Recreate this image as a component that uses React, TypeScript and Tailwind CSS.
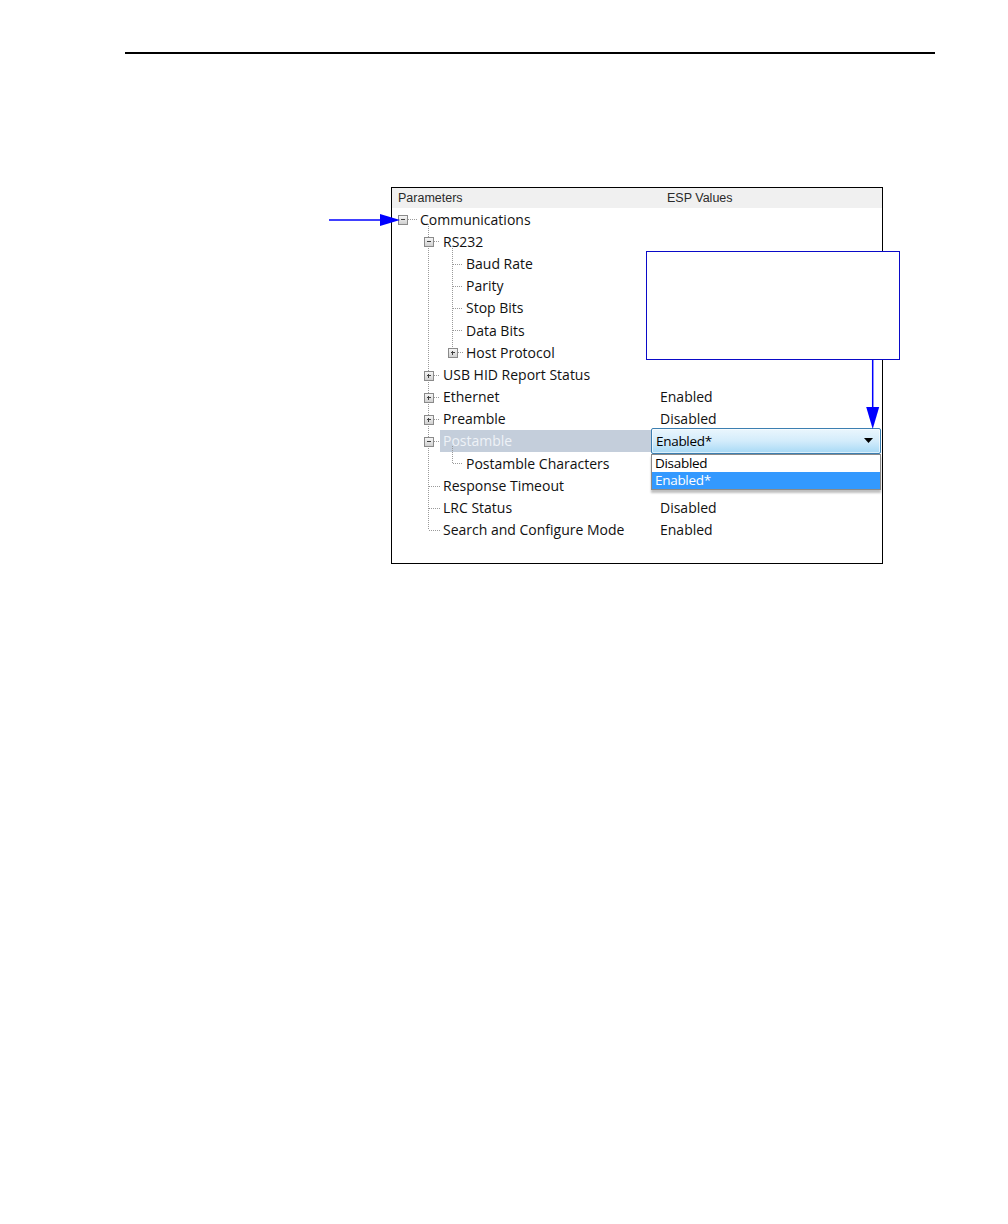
import React from "react";

type Row = {
  label: string;
  level: 0 | 1 | 2;
  box?: "minus" | "plus";
  value?: string;
  selected?: boolean;
};

const rows: Row[] = [
  { label: "Communications", level: 0, box: "minus" },
  { label: "RS232", level: 1, box: "minus" },
  { label: "Baud Rate", level: 2 },
  { label: "Parity", level: 2 },
  { label: "Stop Bits", level: 2 },
  { label: "Data Bits", level: 2 },
  { label: "Host Protocol", level: 2, box: "plus" },
  { label: "USB HID Report Status", level: 1, box: "plus" },
  { label: "Ethernet", level: 1, box: "plus", value: "Enabled" },
  { label: "Preamble", level: 1, box: "plus", value: "Disabled" },
  { label: "Postamble", level: 1, box: "minus", selected: true },
  { label: "Postamble Characters", level: 2 },
  { label: "Response Timeout", level: 1 },
  { label: "LRC Status", level: 1, value: "Disabled" },
  { label: "Search and Configure Mode", level: 1, value: "Enabled" },
];

const ROW_H = 22.2;
const LEVEL_X = [10.5, 36.5, 60.5];
const TEXT_X = [28, 51, 74];
const padClass = ["pl-[28px]", "pl-[51px]", "pl-[74px]"];

function TreeLines() {
  const cy = (i: number) => ROW_H / 2 + i * ROW_H;
  const dot = { stroke: "#9a9a9a", strokeWidth: 1, strokeDasharray: "1 1" };
  const els: React.ReactNode[] = [];
  const vlines: [number, number, number][] = [
    [LEVEL_X[1], cy(0) + 5, cy(14)],
    [LEVEL_X[2], cy(1) + 5, cy(6)],
    [LEVEL_X[2], cy(10) + 5, cy(11)],
  ];
  vlines.forEach(([x, y1, y2], k) =>
    els.push(<line key={"v" + k} x1={x} x2={x} y1={y1} y2={y2} {...dot} />)
  );
  rows.forEach((r, i) => {
    const x = LEVEL_X[r.level];
    const y = Math.round(cy(i)) + 0.5;
    const textX = TEXT_X[r.level];
    const startX = r.box ? x + 5 : x;
    els.push(
      <line key={"h" + i} x1={startX} x2={textX - 3} y1={y} y2={y} {...dot} />
    );
    if (r.box) {
      const bx = x - 4.5;
      const by = y - 4.5;
      els.push(
        <g key={"b" + i}>
          <rect x={bx} y={by} width={9} height={9} fill="url(#boxg)" stroke="#8a8a8a" strokeWidth={1} />
          <line x1={bx + 2.5} x2={bx + 7} y1={y} y2={y} stroke="#404040" strokeWidth={1} />
          {r.box === "plus" && (
            <line x1={x} x2={x} y1={by + 2.5} y2={by + 7} stroke="#404040" strokeWidth={1} />
          )}
        </g>
      );
    }
  });
  return (
    <svg
      className="absolute left-0 top-0 pointer-events-none"
      width={100}
      height={340}
      shapeRendering="crispEdges"
    >
      <defs>
        <linearGradient id="boxg" x1="0" y1="0" x2="0" y2="1">
          <stop offset="0" stopColor="#fafafa" />
          <stop offset="1" stopColor="#d0d0d0" />
        </linearGradient>
      </defs>
      {els}
    </svg>
  );
}

function ComboBox() {
  return (
    <div className="relative flex-1 h-[26px] -my-[2px] mr-[1px]">
      <div className="h-full rounded-[2px] border border-[#3c7fb1] bg-gradient-to-b from-[#eaf6fd] via-[#d3ecfb] to-[#a7d9f5] flex items-center justify-between pl-[4px] pr-[7px] shadow-[inset_0_0_0_1px_rgba(255,255,255,0.6)]">
        <span className="text-[13.5px] text-black tracking-[-0.3px]">Enabled*</span>
        <svg width="9" height="5" viewBox="0 0 9 5">
          <polygon points="0,0 9,0 4.5,5" fill="#000" />
        </svg>
      </div>
      <div className="absolute left-0 right-0 top-full z-10 bg-white border border-[#8a8a8a] shadow-[0_3px_2px_rgba(0,0,0,0.25)]">
        <div className="h-[17px] flex items-center pl-[3px] text-[13.5px] text-black tracking-[-0.3px]">Disabled</div>
        <div className="h-[17px] flex items-center pl-[3px] text-[13.5px] text-white bg-[#3399ff] tracking-[-0.3px]">Enabled*</div>
      </div>
    </div>
  );
}

function TreeRow({ r }: { r: Row }) {
  if (r.selected) {
    return (
      <div className="h-[22.2px] flex items-center">
        <div className="w-[259px] h-full flex items-center pl-[48px]">
          <div className="w-full h-full bg-[#c4cedb] flex items-center pl-[3px] text-[#eef2f7]">
            {r.label}
          </div>
        </div>
        <ComboBox />
      </div>
    );
  }
  return (
    <div className="h-[22.2px] grid grid-cols-[268px_1fr] items-center">
      <div className={padClass[r.level] + " whitespace-nowrap"}>{r.label}</div>
      <div>{r.value ?? ""}</div>
    </div>
  );
}

export default function App() {
  return (
    <div
      className="relative w-[1008px] h-[1224px] bg-white overflow-hidden"
      style={{ fontFamily: '"Open Sans", "Noto Sans", sans-serif' }}
    >
      <div className="pt-[52px] pl-[125px]">
        <div className="w-[810px] h-[2px] bg-black" />
      </div>

      <div className="ml-[391px] mt-[133px] w-[492px] h-[377px] border border-black bg-white">
        <div
          className="h-[20px] bg-[#f0f0f0] grid grid-cols-[275px_1fr] items-center text-[12.5px] text-[#2a2a2a]"
          style={{ fontFamily: '"Liberation Sans", Arial, sans-serif' }}
        >
          <div className="pl-[6px]">Parameters</div>
          <div>ESP Values</div>
        </div>
        <div className="relative text-[14px] text-[#111]">
          <TreeLines />
          {rows.map((r, i) => (
            <TreeRow key={i} r={r} />
          ))}
        </div>
      </div>

      {/* Callout box */}
      <div className="absolute left-[646px] top-[251px] w-[254px] h-[109px] border-[1.5px] border-[#0a0ac8] bg-white" />

      {/* Arrows */}
      <svg className="absolute left-0 top-0 pointer-events-none" width={1008} height={600}>
        <line x1={329} y1={220} x2={384} y2={220} stroke="#0000ff" strokeWidth={1.5} />
        <polygon points="380,214 400,220 380,226" fill="#0000ff" />
        <line x1={872.7} y1={360} x2={872.7} y2={410} stroke="#0000ff" strokeWidth={1.5} />
        <polygon points="866.2,407 879.2,407 872.7,429" fill="#0000ff" />
      </svg>
    </div>
  );
}
